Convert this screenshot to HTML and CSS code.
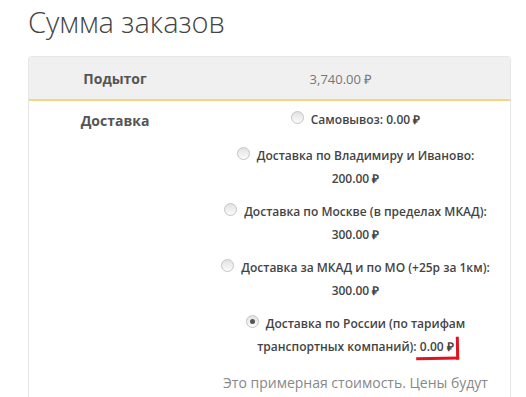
FILE: index.html
```html
<!DOCTYPE html>
<html lang="ru">
<head>
    <meta charset="UTF-8">
    <meta name="viewport" content="width=device-width, initial-scale=1.0">
    <title>Сумма заказов</title>
    <link rel="stylesheet" href="styles.css">
</head>
<body>

<div class="cart-totals">
    <h2>Сумма заказов</h2>

    <table class="totals-table">
        <tr class="subtotal">
            <th>Подытог</th>
            <td><span class="amount">3,740.00 ₽</span></td>
        </tr>
        <tr class="shipping">
            <th>Доставка</th>
            <td>
                <ul class="methods">
                    <li><span class="radio"></span><label>Самовывоз: <span class="price">0.00 ₽</span></label></li>
                    <li><span class="radio"></span><label>Доставка по Владимиру и Иваново: <span class="price">200.00 ₽</span></label></li>
                    <li><span class="radio"></span><label>Доставка по Москве (в пределах МКАД): <span class="price">300.00 ₽</span></label></li>
                    <li><span class="radio"></span><label>Доставка за МКАД и по МО (+25р за 1км): <span class="price">300.00 ₽</span></label></li>
                    <li class="marked"><span class="radio checked"></span><label>Доставка по России (по тарифам транспортных компаний): <span class="price">0.00 ₽</span></label></li>
                </ul>
                <p class="note">Это примерная стоимость. Цены будут уточнены во время оформления заказа.</p>
            </td>
        </tr>
    </table>
</div>

</body>
</html>
```

FILE: styles.css
```css
body {
    margin: 0;
    font-family: "Open Sans", Arial, sans-serif;
    color: #444;
    background-color: #fff;
    overflow: hidden;
}

.cart-totals {
    padding: 0 15px 0 28px;
}

h2 {
    font-size: 29px;
    font-weight: 300;
    color: #444;
    margin: 0;
    padding-top: 2px;
    line-height: 40px;
    height: 54px;
}

.totals-table {
    width: 483px;
    border-collapse: separate;
    border-spacing: 0;
    border: 1px solid #e6e6e6;
    border-bottom: none;
    border-radius: 4px 4px 0 0;
}

.totals-table th {
    width: 170px;
    font-size: 14px;
    font-weight: 700;
    color: #555;
    text-align: center;
    vertical-align: top;
}

.totals-table td {
    text-align: center;
    vertical-align: top;
}

.subtotal th,
.subtotal td {
    background-color: #f0f0f0;
    border-bottom: 2px solid #f5d67e;
    height: 40px;
    vertical-align: middle;
}

.subtotal th {
    border-top-left-radius: 4px;
}

.subtotal td {
    border-top-right-radius: 4px;
    padding-right: 30px;
}

.amount {
    font-size: 13px;
    color: #777;
}

.shipping th {
    padding-top: 10px;
}

.methods {
    list-style: none;
    margin: 0;
    padding: 6px 14px 0 14px;
}

.methods li {
    font-size: 12px;
    font-weight: 600;
    color: #444;
    line-height: 23px;
    margin-bottom: 10px;
}

.methods li:first-child {
    margin-bottom: 13px;
}

.methods label {
    margin-left: 7px;
}

.price {
    white-space: nowrap;
}

.radio {
    display: inline-block;
    width: 11px;
    height: 11px;
    border: 1px solid #c4c4c4;
    border-radius: 50%;
    background: linear-gradient(#e2e2e2, #fbfbfb);
    vertical-align: middle;
    position: relative;
    top: -3px;
}

.radio.checked::after {
    content: "";
    position: absolute;
    left: 3px;
    top: 3px;
    width: 5px;
    height: 5px;
    border-radius: 50%;
    background-color: #555;
}

.marked .price {
    position: relative;
}

/* red hand-drawn mark under the price */
.marked .price::after {
    content: "";
    position: absolute;
    left: -4px;
    right: -5px;
    bottom: -5px;
    height: 20px;
    border-bottom: 3px solid #e0141e;
    border-right: 3px solid #e0141e;
    transform: rotate(-1deg);
}

.note {
    margin: 0;
    padding: 3px 4px 0;
    font-size: 14px;
    line-height: 23px;
    color: #888;
}
```
